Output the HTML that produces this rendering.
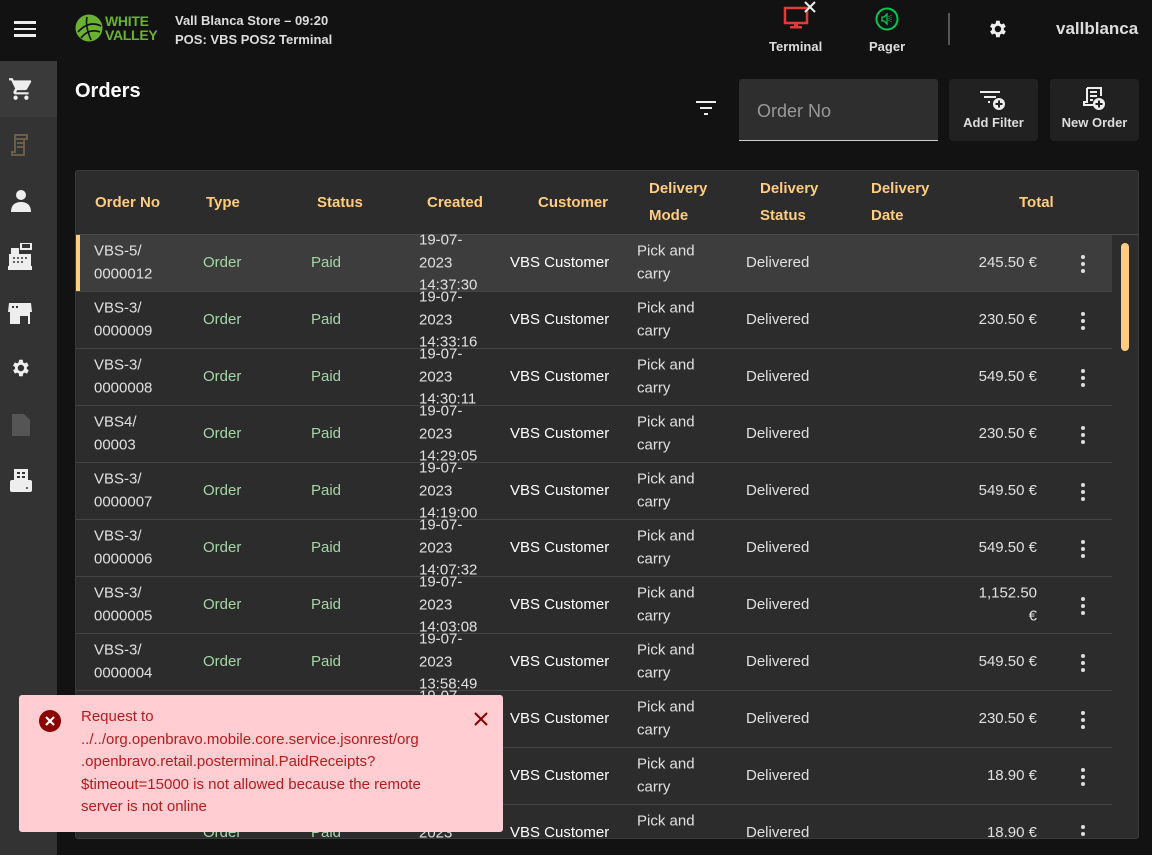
<!DOCTYPE html>
<html><head><meta charset="utf-8"><style>
*{box-sizing:border-box;margin:0;padding:0}
body{width:1152px;height:855px;background:#121212;font-family:"Liberation Sans",sans-serif;color:#e0e0e0;position:relative;overflow:hidden}
.abs{position:absolute}
.side{left:0;top:61px;width:57px;height:794px;background:#333}
.tbl{left:75px;top:170px;width:1064px;height:669px;background:#2c2c2c;border:1px solid #3a3a3a;border-radius:3px;overflow:hidden}
.hd{position:absolute;color:#ffcc80;font-weight:bold;font-size:15px;line-height:27px}
.row{position:absolute;left:0;width:1036px;height:57px;border-bottom:1px solid #444}
.c{position:absolute;font-size:15px;line-height:22.5px;top:50%;transform:translateY(-50%)}
.g{color:#a5d6a7}
.w{color:#fff}
.dots{position:absolute;left:1005px;top:20px;width:4px;height:18px}
.dots i{display:block;width:4px;height:4px;border-radius:2px;background:#ddd;margin-bottom:3px}
</style></head><body>
<div class="abs" style="left:14px;top:21px;width:22px;height:16px">
<div style="height:2.5px;background:#eee;margin-bottom:4px"></div><div style="height:2.5px;background:#eee;margin-bottom:4px"></div><div style="height:2.5px;background:#eee"></div></div>
<svg class="abs" style="left:75px;top:14px" width="28" height="28" viewBox="0 0 28 28"><circle cx="14" cy="14" r="13.5" fill="#6ab22f"/><path d="M3 18 Q14 6 26 12 M6 24 Q14 14 25 18 M12 3 Q10 12 16 26" stroke="#121212" stroke-width="1.6" fill="none"/></svg>
<div class="abs" style="left:105px;top:14px;color:#6ab22f;font-weight:bold;font-size:14px;line-height:14px;letter-spacing:-0.3px">WHITE<br>VALLEY</div>
<div class="abs" style="left:175px;top:11px;font-size:13px;font-weight:bold;color:#ddd;line-height:19px">Vall Blanca Store – 09:20<br>POS: VBS POS2 Terminal</div>
<svg class="abs" style="left:783px;top:0" width="36" height="32" viewBox="0 0 36 32"><rect x="2" y="8" width="22" height="15" fill="none" stroke="#e53935" stroke-width="2.5"/><rect x="11" y="23" width="4" height="3" fill="#e53935"/><rect x="7" y="26" width="12" height="2.5" fill="#e53935"/><path d="M22 2 L32 12 M32 2 L22 12" stroke="#eee" stroke-width="2"/></svg>
<div class="abs" style="left:769px;top:39px;font-size:13px;font-weight:bold;color:#ddd">Terminal</div>
<svg class="abs" style="left:875px;top:7px" width="24" height="24" viewBox="0 0 24 24"><circle cx="12" cy="12" r="10.5" fill="none" stroke="#00c853" stroke-width="2"/><path d="M7 10h2l3-3v10l-3-3H7z" fill="none" stroke="#00c853" stroke-width="1.3"/><path d="M14 9v6M16 8v8" stroke="#00c853" stroke-width="1" stroke-dasharray="1 1"/></svg>
<div class="abs" style="left:869px;top:39px;font-size:13px;font-weight:bold;color:#ddd">Pager</div>
<div class="abs" style="left:948px;top:13px;width:2px;height:32px;background:#555"></div>
<svg class="abs" style="left:986px;top:18px" width="22" height="22" viewBox="0 0 24 24"><path fill="#eee" d="M19.4 13a7.5 7.5 0 000-2l2.1-1.6-2-3.5-2.5 1a7.3 7.3 0 00-1.7-1L15 3h-4l-.4 2.9a7.3 7.3 0 00-1.7 1l-2.5-1-2 3.5L6.6 11a7.5 7.5 0 000 2l-2.1 1.6 2 3.5 2.5-1a7.3 7.3 0 001.7 1L11 21h4l.4-2.9a7.3 7.3 0 001.7-1l2.5 1 2-3.5zM13 15.5A3.5 3.5 0 1113 8.5a3.5 3.5 0 010 7z"/></svg>
<div class="abs" style="left:1056px;top:19px;font-size:17px;font-weight:bold;color:#ddd">vallblanca</div>
<div class="abs side"></div>
<div class="abs" style="left:0;top:61px;width:57px;height:56px;background:#3a3a3a"></div>
<svg class="abs" style="left:8px;top:76px" width="26" height="26" viewBox="0 0 24 24"><path fill="#eee" d="M7 18a2 2 0 100 4 2 2 0 000-4zM1 2v2h2l3.6 7.6L5.2 14A2 2 0 007 17h12v-2H7.4l1.1-2h7.5a2 2 0 001.7-1l3.6-6.5A1 1 0 0020.5 4H5.2l-.9-2zm16 16a2 2 0 100 4 2 2 0 000-4z"/></svg>
<svg class="abs" style="left:9px;top:133px" width="22" height="24" viewBox="0 0 22 24"><path d="M6 2h12v4h-3v16H3v-3h3z M6 6h8M8 10h6M8 14h6" fill="none" stroke="#6d5d45" stroke-width="2"/></svg>
<svg class="abs" style="left:9px;top:188px" width="24" height="24" viewBox="0 0 24 24"><circle cx="12" cy="7" r="5" fill="#eee"/><path d="M2 24c0-7 4-10 10-10s10 3 10 10z" fill="#eee"/></svg>
<svg class="abs" style="left:7px;top:243px" width="26" height="28" viewBox="0 0 26 28"><rect x="14" y="0" width="10" height="6" fill="none" stroke="#eee" stroke-width="2"/><rect x="4" y="5" width="8" height="6" fill="#eee"/><path d="M2 11h22v12H2z" fill="#eee"/><path d="M6 15h2M10 15h2M14 15h2M18 15h2M6 19h2M10 19h2M14 19h2" stroke="#333" stroke-width="1.5"/><rect x="1" y="23" width="24" height="4" fill="#eee"/></svg>
<svg class="abs" style="left:7px;top:300px" width="26" height="26" viewBox="0 0 26 26"><path d="M2 3h22l1 9H1z M3 12h20v12h-2v-8H13v8H3z" fill="#eee"/><path d="M5 7h2M9 7h2" stroke="#333" stroke-width="2"/></svg>
<svg class="abs" style="left:9px;top:357px" width="22" height="22" viewBox="0 0 24 24"><path fill="#eee" d="M19.4 13a7.5 7.5 0 000-2l2.1-1.6-2-3.5-2.5 1a7.3 7.3 0 00-1.7-1L15 3h-4l-.4 2.9a7.3 7.3 0 00-1.7 1l-2.5-1-2 3.5L6.6 11a7.5 7.5 0 000 2l-2.1 1.6 2 3.5 2.5-1a7.3 7.3 0 001.7 1L11 21h4l.4-2.9a7.3 7.3 0 001.7-1l2.5 1 2-3.5zM13 15.5A3.5 3.5 0 1113 8.5a3.5 3.5 0 010 7z"/></svg>
<svg class="abs" style="left:11px;top:413px" width="20" height="24" viewBox="0 0 20 24"><path d="M1 1h12l6 6v16H1z" fill="#555"/></svg>
<svg class="abs" style="left:9px;top:468px" width="24" height="26" viewBox="0 0 24 26"><rect x="5" y="1" width="14" height="12" fill="#eee"/><path d="M8 5h3M13 5h3M8 9h3M13 9h3" stroke="#333" stroke-width="2"/><rect x="1" y="12" width="22" height="12" rx="2" fill="#eee"/><circle cx="18" cy="20" r="1" fill="#333"/></svg>
<div class="abs" style="left:75px;top:80px;font-size:20px;font-weight:bold;color:#fff">Orders</div>
<svg class="abs" style="left:695px;top:100px" width="22" height="16" viewBox="0 0 22 16"><path d="M1 2h20M5 8h12M9 14h4" stroke="#eee" stroke-width="2"/></svg>
<div class="abs" style="left:739px;top:79px;width:199px;height:62px;background:#2e2e2e;border-bottom:1px solid #ccc;border-radius:3px 3px 0 0;font-size:18px;color:#999;padding:22px 0 0 18px">Order No</div>
<div class="abs" style="left:949px;top:79px;width:89px;height:62px;background:#212121;border-radius:4px;text-align:center;font-size:13px;font-weight:bold;color:#ddd;padding-top:36px">Add Filter</div>
<svg class="abs" style="left:980px;top:90px" width="28" height="22" viewBox="0 0 28 22"><path d="M0 2h20M4 7h12M8 12h2" stroke="#eee" stroke-width="2"/><circle cx="19" cy="14" r="6" fill="#eee"/><path d="M19 10.5v7M15.5 14h7" stroke="#212121" stroke-width="2"/></svg>
<div class="abs" style="left:1050px;top:79px;width:89px;height:62px;background:#212121;border-radius:4px;text-align:center;font-size:13px;font-weight:bold;color:#ddd;padding-top:36px">New Order</div>
<svg class="abs" style="left:1082px;top:86px" width="26" height="26" viewBox="0 0 26 26"><path d="M5 2h14v8M5 2v14H2v3h10M8 6h7M8 10h7M8 14h3" fill="none" stroke="#eee" stroke-width="2"/><circle cx="17" cy="18" r="6" fill="#eee"/><path d="M17 14.5v7M13.5 18h7" stroke="#212121" stroke-width="2"/></svg>

<div class="abs tbl">
<div style="position:absolute;left:0;top:0;width:1064px;height:64px;border-bottom:1px solid #4a4a4a"></div>
<div class="hd" style="left:19px;top:18px">Order No</div>
<div class="hd" style="left:130px;top:18px">Type</div>
<div class="hd" style="left:241px;top:18px">Status</div>
<div class="hd" style="left:351px;top:18px">Created</div>
<div class="hd" style="left:462px;top:18px">Customer</div>
<div class="hd" style="left:573px;top:4px">Delivery<br>Mode</div>
<div class="hd" style="left:684px;top:4px">Delivery<br>Status</div>
<div class="hd" style="left:795px;top:4px">Delivery<br>Date</div>
<div class="hd" style="left:943px;top:18px">Total</div>
<div id="rows"></div>
<div style="position:absolute;left:1045px;top:72px;width:8px;height:108px;border-radius:4px;background:#ffcc80"></div>
</div>
<script>
var d=[["VBS-5/<br>0000012","14:37:30","245.50 €"],["VBS-3/<br>0000009","14:33:16","230.50 €"],["VBS-3/<br>0000008","14:30:11","549.50 €"],["VBS4/<br>00003","14:29:05","230.50 €"],["VBS-3/<br>0000007","14:19:00","549.50 €"],["VBS-3/<br>0000006","14:07:32","549.50 €"],["VBS-3/<br>0000005","14:03:08","1,152.50<br>€"],["VBS-3/<br>0000004","13:58:49","549.50 €"],["VBS-3/<br>0000003","13:50:00","230.50 €"],["VBS-3/<br>0000002","13:40:00","18.90 €"],["VBS-3/<br>0000001","13:30:00","18.90 €"]];
var h="";
d.forEach(function(r,i){
h+='<div class="row" style="top:'+(64+i*57)+'px;'+(i==0?'background:#3d3d3d;':'')+'">'+
(i==0?'<div style="position:absolute;left:0;top:0;width:4px;height:56px;background:#ffcc80"></div>':'')+
'<div class="c" style="left:18px">'+r[0]+'</div>'+
'<div class="c g" style="left:127px">Order</div>'+
'<div class="c g" style="left:235px">Paid</div>'+
'<div class="c" style="left:343px">19-07-<br>2023<br>'+r[1]+'</div>'+
'<div class="c w" style="left:434px">VBS Customer</div>'+
'<div class="c" style="left:561px">Pick and<br>carry</div>'+
'<div class="c" style="left:670px">Delivered</div>'+
'<div class="c" style="right:75px;text-align:right">'+r[2]+'</div>'+
'<div class="dots"><i></i><i></i><i></i></div></div>';});
document.getElementById("rows").innerHTML=h;
</script>
<div class="abs" style="left:19px;top:695px;width:484px;height:137px;background:#ffcdd2;border-radius:3px">
<svg style="position:absolute;left:20px;top:15px" width="22" height="22" viewBox="0 0 22 22"><circle cx="11" cy="11" r="11" fill="#8b0000"/><path d="M7 7l8 8M15 7l-8 8" stroke="#fff" stroke-width="2.2"/></svg>
<div style="position:absolute;left:62px;top:11px;font-size:15px;line-height:22.5px;color:#b71c1c">Request to<br>../../org.openbravo.mobile.core.service.jsonrest/org<br>.openbravo.retail.posterminal.PaidReceipts?<br>$timeout=15000 is not allowed because the remote<br>server is not online</div>
<svg style="position:absolute;left:455px;top:17px" width="14" height="14" viewBox="0 0 14 14"><path d="M1 1l12 12M13 1L1 13" stroke="#8b0000" stroke-width="2"/></svg>
</div>
</body></html>
